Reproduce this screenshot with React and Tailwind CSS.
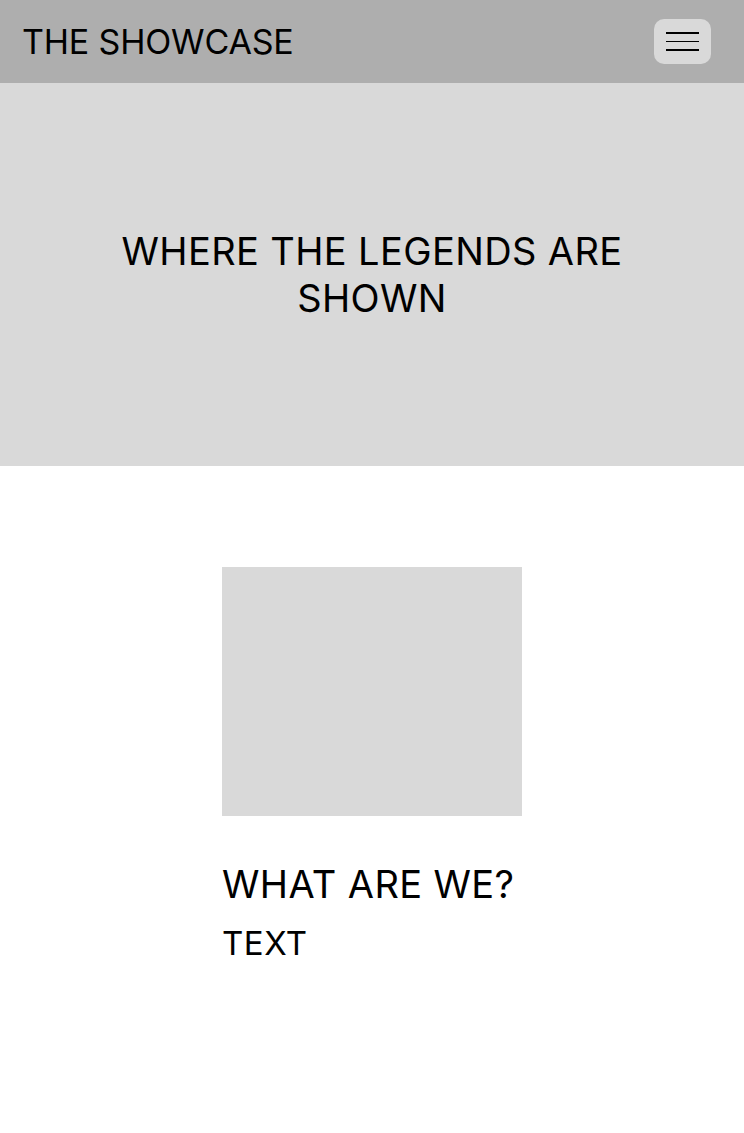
export default function App() {
  return (
    <div className="min-h-[1133px] bg-white text-black" style={{ fontFamily: "Inter, 'Noto Sans', sans-serif" }}>
      <header className="flex h-[83px] items-center justify-between bg-[#aeaeae] pl-[22px] pr-[33px]">
        <h1 className="text-[34px] font-normal leading-none tracking-[-0.005em]">THE SHOWCASE</h1>
        <button className="flex h-[45px] w-[57px] flex-col items-center justify-center gap-[7px] rounded-[10px] bg-[#d9d9d9]">
          <span className="block h-[1.5px] w-[33px] bg-black" />
          <span className="block h-[1.5px] w-[33px] bg-black" />
          <span className="block h-[1.5px] w-[33px] bg-black" />
        </button>
      </header>
      <section className="flex h-[383px] items-center justify-center bg-[#d9d9d9]">
        <h2 className="w-[520px] text-center text-[38px] font-normal leading-[47px] tracking-[0.01em]">
          WHERE THE LEGENDS ARE SHOWN
        </h2>
      </section>
      <section className="flex justify-center pt-[101px]">
        <div className="w-[300px]">
          <div className="h-[249px] w-[300px] bg-[#d9d9d9]" />
          <h3 className="mt-[45px] text-[38px] font-normal leading-[47px] tracking-[0.01em]">WHAT ARE WE?</h3>
          <p className="mt-[15px] text-[33px] leading-[40px] tracking-[0.015em]">TEXT</p>
        </div>
      </section>
    </div>
  );
}
